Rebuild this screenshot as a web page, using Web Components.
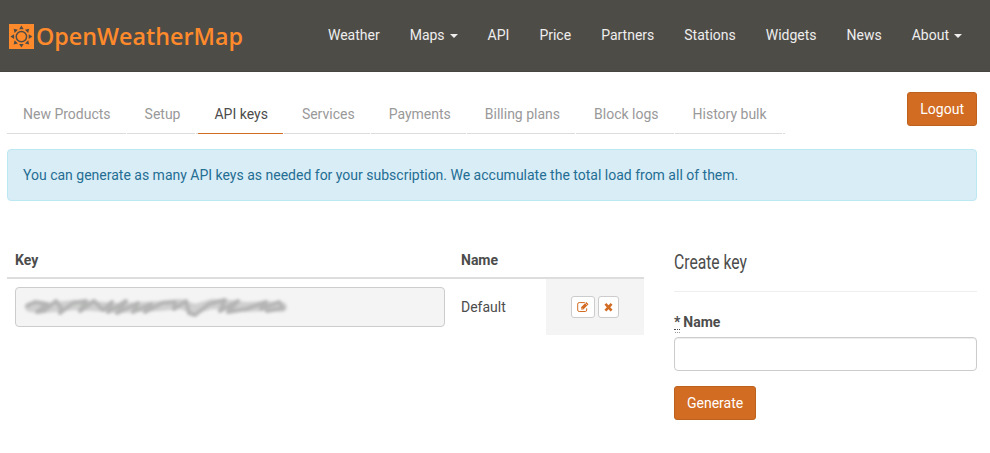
<!DOCTYPE html>
<html lang="en">
<head>
<meta charset="utf-8">
<title>API keys</title>
<style>
body{margin:0;background:#fff;color:#4c4c4c;font:14px/20px Roboto,"Liberation Sans",sans-serif}
main{padding:20px 13px 0 7px}
.top{display:flex;justify-content:space-between;height:57px}
.cols{display:grid;grid-template-columns:637px 303px;gap:30px;margin-top:40px}
</style>
</head>
<body>
<owm-header>
  <owm-link>Weather</owm-link><owm-link caret>Maps</owm-link><owm-link>API</owm-link><owm-link>Price</owm-link><owm-link>Partners</owm-link><owm-link>Stations</owm-link><owm-link>Widgets</owm-link><owm-link>News</owm-link><owm-link caret>About</owm-link>
</owm-header>
<main>
  <div class="top">
    <owm-tabs>
      <owm-tab>New Products</owm-tab><owm-tab>Setup</owm-tab><owm-tab active>API keys</owm-tab><owm-tab>Services</owm-tab><owm-tab>Payments</owm-tab><owm-tab>Billing plans</owm-tab><owm-tab>Block logs</owm-tab><owm-tab>History bulk</owm-tab>
    </owm-tabs>
    <owm-button>Logout</owm-button>
  </div>
  <owm-alert>You can generate as many API keys as needed for your subscription. We accumulate the total load from all of them.</owm-alert>
  <div class="cols">
    <owm-key-table></owm-key-table>
    <owm-create-key></owm-create-key>
  </div>
</main>
<script>
function define(name, html) {
  const template = document.createElement('template');
  template.innerHTML = html;
  customElements.define(name, class extends HTMLElement {
    constructor() {
      super();
      this.attachShadow({mode: 'open'}).append(template.content.cloneNode(true));
    }
  });
}

define('owm-logo', `
<style>:host{display:block;width:240px;height:30px}svg{display:block}text{font:600 24px "Open Sans","Noto Sans",sans-serif}</style>
<svg width="240" height="30" viewBox="0 0 240 30">
  <rect x="1" y="3" width="25" height="25" fill="#ff8a2b"/>
  <g fill="#4e4c47" transform="translate(13.4 15.6)">
    <path id="r" d="M-2.3-7.3 0-11 2.3-7.3z"/>
    <path d="M-2.3-7.3 0-11 2.3-7.3z" transform="rotate(45)"/><path d="M-2.3-7.3 0-11 2.3-7.3z" transform="rotate(90)"/>
    <path d="M-2.3-7.3 0-11 2.3-7.3z" transform="rotate(135)"/><path d="M-2.3-7.3 0-11 2.3-7.3z" transform="rotate(180)"/>
    <path d="M-2.3-7.3 0-11 2.3-7.3z" transform="rotate(225)"/><path d="M-2.3-7.3 0-11 2.3-7.3z" transform="rotate(270)"/>
    <path d="M-2.3-7.3 0-11 2.3-7.3z" transform="rotate(315)"/>
    <circle r="5.2" fill="none" stroke="#4e4c47" stroke-width="1.5"/>
  </g>
  <text x="28" y="24" fill="#ff8a2b" textLength="207" lengthAdjust="spacingAndGlyphs">OpenWeatherMap</text>
</svg>`);

define('owm-header', `
<style>:host{display:flex;justify-content:space-between;box-sizing:border-box;height:72px;padding:21px 13px 0 8px;background:#4e4c47;border-bottom:1px solid #484542}
nav{display:flex;margin-top:4px}</style>
<owm-logo></owm-logo><nav><slot></slot></nav>`);

define('owm-link', `
<style>:host{display:block;padding:0 15px;color:#eee;white-space:nowrap}
:host([caret])::after{content:"";display:inline-block;margin-left:5px;vertical-align:middle;border:4px solid transparent;border-top-color:#eee;border-bottom:0}</style><slot></slot>`);

define('owm-tabs', `<style>:host{display:flex;height:41px;border-bottom:1px solid #ddd;white-space:nowrap}</style><slot></slot>`);

define('owm-tab', `
<style>:host{display:block;position:relative;height:41px;box-sizing:content-box;margin-right:2px;padding:0 16px;line-height:44px;color:#999;border-bottom:1px solid #ddd}
:host([active]){color:#4c4c4c;border-bottom-color:#d26c22}
:host::after{content:"";position:absolute;right:0;bottom:-1px;width:1px;height:1px;background:#fff}</style><slot></slot>`);

define('owm-button', `
<style>:host{display:block;width:max-content;height:max-content}
button{display:block;box-sizing:border-box;height:34px;padding:6px 12px;border:1px solid #bd611e;border-radius:3px;background:#d26c22;color:#fff;font:inherit;line-height:20px}</style>
<button><slot></slot></button>`);

define('owm-alert', `<style>:host{display:block;box-sizing:border-box;height:52px;padding:15px;border:1px solid #bce8f1;border-radius:4px;background:#d9edf7;color:#246e93}</style><slot></slot>`);

define('owm-icon-button', `
<style>:host{display:block}button{display:flex;align-items:center;box-sizing:border-box;height:22px;padding:0 5px;border:1px solid #ccc;border-radius:3px;background:#fff;color:#d26c22}
</style><button><slot></slot></button>`);

define('owm-key-table', `
<style>:host{display:block}
.row{display:grid;grid-template-columns:446px 93px 98px}
.head{height:36px;border-bottom:2px solid #ddd;font-weight:700}
.head span{padding:9px 8px 0}
.body{height:56px}
.key{box-sizing:border-box;height:40px;margin:8px 8px 0;border:1px solid #ccc;border-radius:4px;background:#f4f4f4}
.key svg{display:block}
.name{padding:18px 8px 0}
.act{display:flex;gap:3px;padding:17px 0 0 25px;background:#f4f4f4}</style>
<div class="row head"><span>Key</span><span>Name</span><span></span></div>
<div class="row body">
  <div class="key"><svg width="300" height="38" viewBox="16 288 300 38" fill="none" stroke-linecap="round" stroke-linejoin="round">
    <defs><filter id="b" x="-10%" y="-60%" width="120%" height="220%"><feGaussianBlur stdDeviation="1.8"/></filter></defs>
    <g filter="url(#b)">
      <path stroke="#cfd0cf" stroke-width="10" d="M30 307 42 308 55 307 75 305 92 306 118 308 140 307 160 306 180 304 195 309 212 304 230 305 246 307 265 306 282 307"/>
      <path stroke="#b4b5b4" stroke-width="4" d="M27 306 35 302 47 304 37 312 44 311 56 301 61 308 60 313 73 303 86 301 80 311 94 301 103 310 112 302 108 312 126 301 117 313 138 303 133 312 151 304 145 312 162 303 175 302 174 309 186 301 189 313 195 315 209 304 225 300 220 311 238 301 228 312 246 309 266 302 261 309 279 302 283 308 267 311"/>
    </g></svg></div>
  <div class="name">Default</div>
  <div class="act">
    <owm-icon-button><svg width="12" height="12" viewBox="0 0 12 12" fill="none" stroke="currentColor"><path d="M7.8 1.6H2.2A1.5 1.5 0 0 0 .7 3.1V9a1.5 1.5 0 0 0 1.5 1.5h6A1.5 1.5 0 0 0 9.700 9V7.300"/><path d="M4.100 8.500V6.300L9.300 1l2.200 2.200-5.200 5.300z" fill="currentColor" stroke="none"/><path d="M8.200 2.200l2.200 2.200M4.500 7l1.100 1.100" stroke="#fff" stroke-width=".6"/></svg></owm-icon-button>
    <owm-icon-button><svg width="9" height="12" viewBox="0 0 9 12"><path d="M2.300 3.800l4.400 4.900M6.700 3.800l-4.400 4.900" stroke="currentColor" stroke-width="2.600" stroke-linecap="square"/></svg></owm-icon-button>
  </div>
</div>`);

define('owm-create-key', `
<style>:host{display:block}
svg{display:block}text{font:21px Roboto,sans-serif}
hr{height:0;margin:18px 0 20px;border:0;border-top:1px solid #eee}
label{display:block;font-weight:700;margin-bottom:5px}
abbr{display:inline-block;position:relative;height:17px;border-bottom:1px dotted #4c4c4c;margin-right:3px}
abbr::after{content:"";position:absolute;left:1px;right:0;bottom:-4px;border-bottom:1px dotted #999}
input{display:block;box-sizing:border-box;width:100%;height:34px;margin-bottom:15px;border:1px solid #ccc;border-radius:4px;box-shadow:inset 0 1px 1px rgba(0,0,0,.075)}</style>
<svg width="100" height="32"><text x="0" y="28" fill="#4c4c4c" textLength="73" lengthAdjust="spacingAndGlyphs">Create key</text></svg>
<hr>
<label><abbr>*</abbr>Name</label>
<input>
<owm-button>Generate</owm-button>`);
</script>
</body>
</html>
